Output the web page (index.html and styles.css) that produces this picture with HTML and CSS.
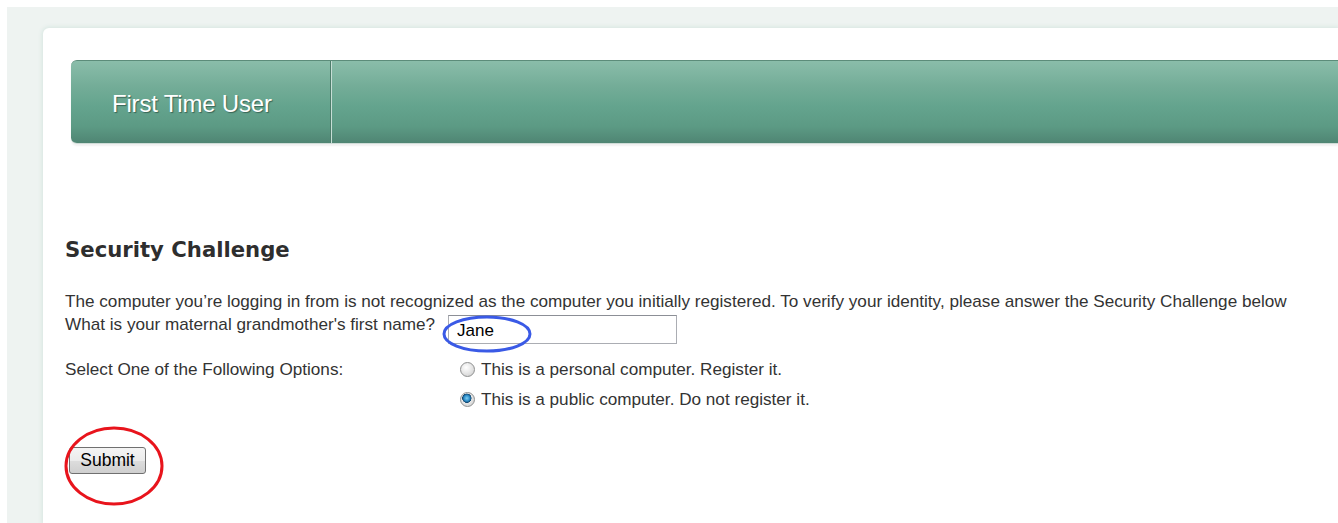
FILE: index.html
```html
<!DOCTYPE html>
<html>
<head>
<meta charset="utf-8">
<title>First Time User</title>
<link rel="stylesheet" href="styles.css">
</head>
<body>
<div class="frame">
  <div class="panel">
    <div class="tabbar">
      <div class="tab">First Time User</div>
      <div class="tab-rest"></div>
    </div>

    <form class="challenge">
      <h2 class="title">Security Challenge</h2>
      <p class="intro">The computer you’re logging in from is not recognized as the computer you initially registered. To verify your identity, please answer the Security Challenge below</p>

      <div class="row row-question">
        <label class="label" for="answer">What is your maternal grandmother's first name?</label>
        <div class="field">
          <input id="answer" class="text-input" type="text" value="Jane">
          <svg class="mark mark-blue" width="96" height="44" viewBox="0 0 96 44"><ellipse cx="48" cy="22" rx="43" ry="17" fill="none" stroke="#3a5ae6" stroke-width="3"/></svg>
        </div>
      </div>

      <div class="row row-options">
        <div class="label">Select One of the Following Options:</div>
        <div class="options">
          <label class="option"><input class="radio" type="radio" name="reg"> This is a personal computer. Register it.</label>
          <label class="option"><input class="radio" type="radio" name="reg" checked> This is a public computer. Do not register it.</label>
        </div>
      </div>

      <div class="actions">
        <button type="button" class="submit">Submit</button>
        <svg class="mark mark-red" width="104" height="84" viewBox="0 0 104 84"><ellipse cx="52" cy="42" rx="48" ry="38" fill="none" stroke="#e8141c" stroke-width="3"/></svg>
      </div>
    </form>
  </div>
</div>
</body>
</html>
```

FILE: styles.css
```css
html, body {
  margin: 0;
  height: 100%;
  background: #ffffff;
}

body {
  padding: 7px 0 0 7px;
  box-sizing: border-box;
  overflow: hidden;
  font-family: "Liberation Sans", Arial, sans-serif;
  color: #333333;
}

.frame {
  height: 100%;
  background: #eef3f1;
  padding: 21px 0 0 36px;
  box-sizing: border-box;
}

.panel {
  height: 100%;
  background: #ffffff;
  border-top-left-radius: 6px;
  box-shadow: 0 0 4px 1px #d6e6e0;
  padding: 32px 0 0 28px;
  box-sizing: border-box;
}

/* green header bar */
.tabbar {
  display: flex;
  height: 84px;
  border-radius: 6px 0 0 6px;
  border-top: 1px solid #5c8c7a;
  border-bottom: 1px solid #cfdcd7;
  box-sizing: border-box;
  background: linear-gradient(to bottom, #8abdaa 0%, #74ad98 30%, #64a48e 55%, #5c9a84 80%, #4f8573 100%);
  box-shadow: 0 2px 2px rgba(0, 0, 0, 0.06);
  overflow: hidden;
}

.tab {
  width: 260px;
  flex: none;
  border-right: 1px solid #4d7d6b;
  box-shadow: 1px 0 0 #c6ded5;
  padding-left: 41px;
  box-sizing: border-box;
  display: flex;
  align-items: center;
  padding-top: 4px;
  font-size: 24px;
  color: #ffffff;
  letter-spacing: -0.2px;
  text-shadow: 1px 1px 1px rgba(30, 60, 50, 0.6);
}

.tab-rest {
  flex: 1;
  margin-left: 1px;
}

/* form */
.challenge {
  padding-top: 94px;
  margin-left: -6px;
}

.title {
  margin: 0;
  font-family: "DejaVu Sans", Verdana, sans-serif;
  font-size: 21.2px;
  font-weight: bold;
  color: #2e2e2e;
  line-height: 24px;
}

.intro {
  margin: 28px 0 0;
  font-size: 17.15px;
  line-height: 22px;
  white-space: nowrap;
}

.row {
  display: flex;
  font-size: 17.15px;
}

.label {
  width: 383px;
  flex: none;
}

.row-question {
  margin-top: 2px;
}

.field {
  position: relative;
  margin-top: 1px;
}

.text-input {
  width: 229px;
  height: 29px;
  box-sizing: border-box;
  border: 1px solid #abadb3;
  border-top-color: #8c8f96;
  padding: 2px 8px 0;
  font-family: "Liberation Sans", Arial, sans-serif;
  font-size: 17px;
  color: #000000;
  outline: none;
  display: block;
}

.mark {
  position: absolute;
  pointer-events: none;
}

.mark-blue {
  left: -9px;
  top: -3px;
}

.row-options {
  margin-top: 15px;
}

.options {
  display: flex;
  flex-direction: column;
  gap: 9px;
  padding-left: 12px;
}

.option {
  display: flex;
  align-items: center;
  gap: 6px;
  line-height: 21px;
}

.radio {
  -webkit-appearance: none;
  appearance: none;
  margin: 0;
  width: 15px;
  height: 15px;
  border-radius: 50%;
  border: 1px solid #8e8f8f;
  background: radial-gradient(circle at 40% 35%, #ffffff 0%, #e8e8e8 45%, #c9c9c9 100%);
  box-sizing: border-box;
  flex: none;
}

.radio:checked {
  background:
    radial-gradient(circle at 45% 40%, #7fd0f4 0%, #2a8ac6 28%, #12466e 42%, transparent 46%),
    radial-gradient(circle at 40% 35%, #ffffff 0%, #e8e8e8 45%, #c9c9c9 100%);
}

.actions {
  position: relative;
  margin-top: 37px;
  padding-left: 4px;
}

.submit {
  width: 77px;
  height: 27px;
  border: 1px solid #707070;
  border-radius: 3px;
  background: linear-gradient(to bottom, #f4f4f4 0%, #ebebeb 50%, #dddddd 51%, #cfcfcf 100%);
  font-family: "Liberation Sans", Arial, sans-serif;
  font-size: 17.5px;
  color: #000000;
  padding: 0;
}

.mark-red {
  left: -3px;
  top: -23px;
}
```
